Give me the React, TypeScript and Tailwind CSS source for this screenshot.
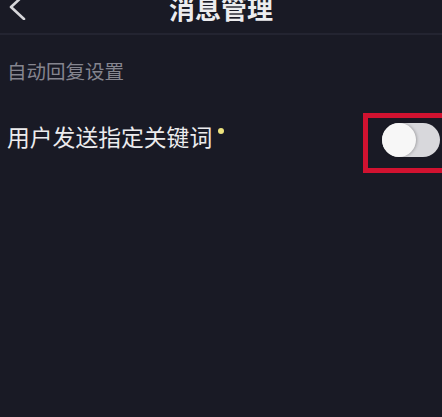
const cjk = { fontFamily: '"Noto Sans CJK SC", "Noto Sans", sans-serif' };

function BackArrow() {
  return (
    <svg width="30" height="22" viewBox="0 0 30 22" className="mt-[-2px]">
      <polyline
        points="23,-3 10,9 23,21"
        fill="none"
        stroke="#d6d6da"
        strokeWidth="2.6"
        strokeLinecap="round"
        strokeLinejoin="round"
      />
    </svg>
  );
}

export default function App() {
  return (
    <div
      className="w-[442px] h-[417px] overflow-hidden bg-[#191a25] text-white"
      style={cjk}
    >
      <header className="grid grid-cols-[40px_1fr_40px] h-[35px] border-b-2 border-[#232431]">
        <div className="pl-[1px]">
          <BackArrow />
        </div>
        <h1 className="text-center text-[26px] leading-none font-bold text-[#ececef] mt-[-5px]">
          消息管理
        </h1>
        <div />
      </header>

      <div className="pl-[7px] pt-[26px]">
        <p className="text-[19.5px] leading-none text-[#85858f]">自动回复设置</p>

        <div className="flex justify-between items-start mt-[32px]">
          <div className="flex items-start mt-[13px]">
            <span className="text-[22.8px] leading-none text-[#ececee]">
              用户发送指定关键词
            </span>
            <span className="ml-[6px] mt-[2px] w-[6px] h-[6px] rounded-full bg-[#ece27e]" />
          </div>

          <div className="w-[84px] mr-[-5px] shrink-0 border-[5px] border-[#d11230] pl-[14px] pt-[5px] pb-[11px]">
            <div className="w-[58px] h-[34px] rounded-full bg-[#d8d8dc] flex items-center">
              <div className="w-[34px] h-[34px] rounded-full bg-[#f7f7f7] shadow-[1px_0_3px_rgba(0,0,0,0.25)]" />
            </div>
          </div>
        </div>
      </div>
    </div>
  );
}
